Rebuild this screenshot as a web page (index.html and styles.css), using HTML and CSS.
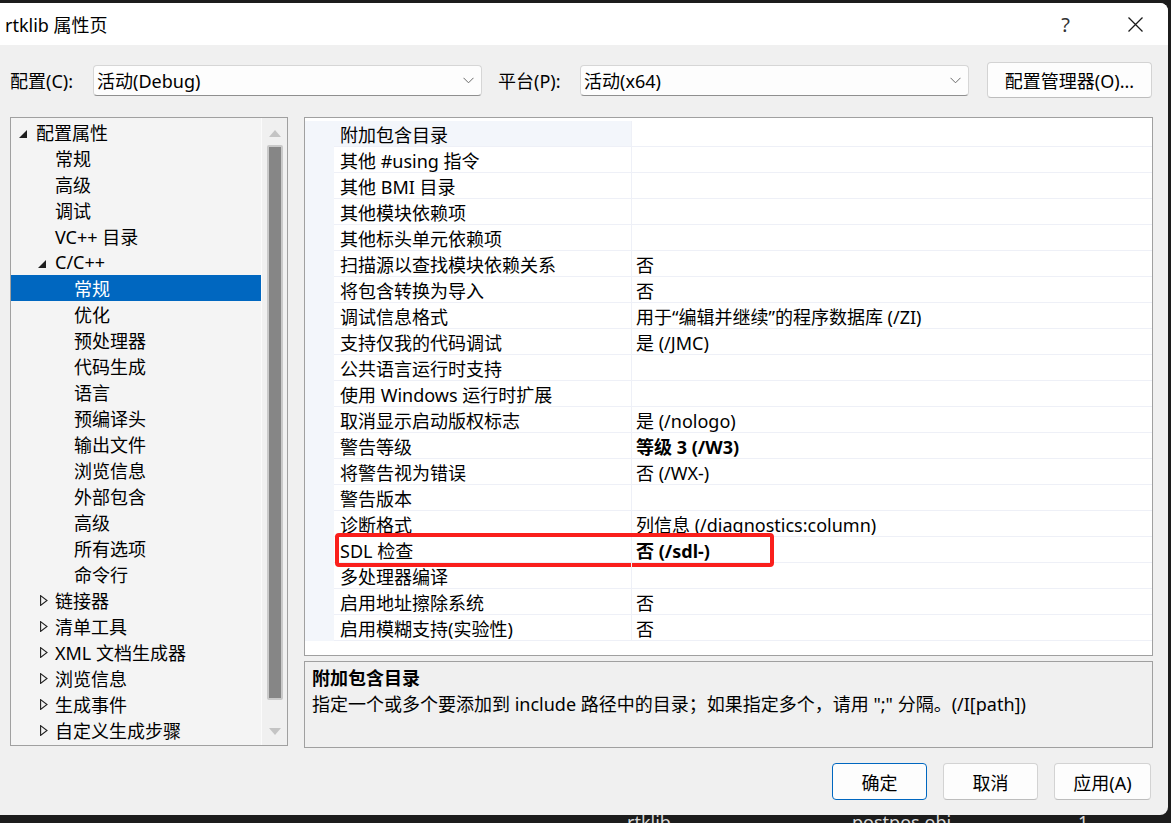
FILE: index.html
```html
<!DOCTYPE html>
<html>
<head>
  <meta charset="UTF-8">
  <link rel="stylesheet" href="styles.css">
</head>
<body>
  <div class="dialog">
    <div class="titlebar">
      <span class="title">rtklib 属性页</span>
      <span class="help">?</span>
      <span class="close">
        <svg width="15" height="15" viewBox="0 0 15 15"><path d="M0.5 0.5 L14.5 14.5 M14.5 0.5 L0.5 14.5" stroke="#1a1a1a" stroke-width="1.3" fill="none"/></svg>
      </span>
    </div>

    <div class="config-row">
      <span class="cfg-label">配置(C):</span>
      <div class="combo">活动(Debug)
        <svg class="chev" width="11" height="7" viewBox="0 0 11 7"><path d="M0.5 0.8 L5.5 5.8 L10.5 0.8" stroke="#6a6a6a" stroke-width="1" fill="none"/></svg>
      </div>
      <span class="cfg-label plat">平台(P):</span>
      <div class="combo">活动(x64)
        <svg class="chev" width="11" height="7" viewBox="0 0 11 7"><path d="M0.5 0.8 L5.5 5.8 L10.5 0.8" stroke="#6a6a6a" stroke-width="1" fill="none"/></svg>
      </div>
      <button class="btn cfg-mgr">配置管理器(O)...</button>
    </div>

    <div class="main">
      <div class="tree">
        <div class="tree-list">
          <div class="tree-item lv0"><span class="twisty"><svg class="tw-open" width="8" height="8" viewBox="0 0 8 8"><polygon points="8,0 8,8 0,8" fill="#1e1e1e"/></svg></span>配置属性</div>
          <div class="tree-item lv1"><span class="twisty"></span>常规</div>
          <div class="tree-item lv1"><span class="twisty"></span>高级</div>
          <div class="tree-item lv1"><span class="twisty"></span>调试</div>
          <div class="tree-item lv1"><span class="twisty"></span>VC++ 目录</div>
          <div class="tree-item lv1"><span class="twisty"><svg class="tw-open" width="8" height="8" viewBox="0 0 8 8"><polygon points="8,0 8,8 0,8" fill="#1e1e1e"/></svg></span>C/C++</div>
          <div class="tree-item lv2 selected"><span class="twisty"></span>常规</div>
          <div class="tree-item lv2"><span class="twisty"></span>优化</div>
          <div class="tree-item lv2"><span class="twisty"></span>预处理器</div>
          <div class="tree-item lv2"><span class="twisty"></span>代码生成</div>
          <div class="tree-item lv2"><span class="twisty"></span>语言</div>
          <div class="tree-item lv2"><span class="twisty"></span>预编译头</div>
          <div class="tree-item lv2"><span class="twisty"></span>输出文件</div>
          <div class="tree-item lv2"><span class="twisty"></span>浏览信息</div>
          <div class="tree-item lv2"><span class="twisty"></span>外部包含</div>
          <div class="tree-item lv2"><span class="twisty"></span>高级</div>
          <div class="tree-item lv2"><span class="twisty"></span>所有选项</div>
          <div class="tree-item lv2"><span class="twisty"></span>命令行</div>
          <div class="tree-item lv1"><span class="twisty"><svg class="tw-closed" width="8" height="11" viewBox="0 0 8 11"><polygon points="0.6,0.6 7,5.5 0.6,10.4" fill="none" stroke="#1e1e1e" stroke-width="1.1"/></svg></span>链接器</div>
          <div class="tree-item lv1"><span class="twisty"><svg class="tw-closed" width="8" height="11" viewBox="0 0 8 11"><polygon points="0.6,0.6 7,5.5 0.6,10.4" fill="none" stroke="#1e1e1e" stroke-width="1.1"/></svg></span>清单工具</div>
          <div class="tree-item lv1"><span class="twisty"><svg class="tw-closed" width="8" height="11" viewBox="0 0 8 11"><polygon points="0.6,0.6 7,5.5 0.6,10.4" fill="none" stroke="#1e1e1e" stroke-width="1.1"/></svg></span>XML 文档生成器</div>
          <div class="tree-item lv1"><span class="twisty"><svg class="tw-closed" width="8" height="11" viewBox="0 0 8 11"><polygon points="0.6,0.6 7,5.5 0.6,10.4" fill="none" stroke="#1e1e1e" stroke-width="1.1"/></svg></span>浏览信息</div>
          <div class="tree-item lv1"><span class="twisty"><svg class="tw-closed" width="8" height="11" viewBox="0 0 8 11"><polygon points="0.6,0.6 7,5.5 0.6,10.4" fill="none" stroke="#1e1e1e" stroke-width="1.1"/></svg></span>生成事件</div>
          <div class="tree-item lv1"><span class="twisty"><svg class="tw-closed" width="8" height="11" viewBox="0 0 8 11"><polygon points="0.6,0.6 7,5.5 0.6,10.4" fill="none" stroke="#1e1e1e" stroke-width="1.1"/></svg></span>自定义生成步骤</div>
        </div>
        <div class="scrollbar">
          <span class="arrow-up"></span>
          <span class="thumb"></span>
          <span class="arrow-down"></span>
        </div>
      </div>

      <div class="right-col">
        <div class="grid">
          <div class="prop-row"><span class="gutter"></span><span class="name current">附加包含目录</span><span class="value"></span></div>
          <div class="prop-row"><span class="gutter"></span><span class="name">其他 #using 指令</span><span class="value"></span></div>
          <div class="prop-row"><span class="gutter"></span><span class="name">其他 BMI 目录</span><span class="value"></span></div>
          <div class="prop-row"><span class="gutter"></span><span class="name">其他模块依赖项</span><span class="value"></span></div>
          <div class="prop-row"><span class="gutter"></span><span class="name">其他标头单元依赖项</span><span class="value"></span></div>
          <div class="prop-row"><span class="gutter"></span><span class="name">扫描源以查找模块依赖关系</span><span class="value">否</span></div>
          <div class="prop-row"><span class="gutter"></span><span class="name">将包含转换为导入</span><span class="value">否</span></div>
          <div class="prop-row"><span class="gutter"></span><span class="name">调试信息格式</span><span class="value">用于“编辑并继续”的程序数据库 (/ZI)</span></div>
          <div class="prop-row"><span class="gutter"></span><span class="name">支持仅我的代码调试</span><span class="value">是 (/JMC)</span></div>
          <div class="prop-row"><span class="gutter"></span><span class="name">公共语言运行时支持</span><span class="value"></span></div>
          <div class="prop-row"><span class="gutter"></span><span class="name">使用 Windows 运行时扩展</span><span class="value"></span></div>
          <div class="prop-row"><span class="gutter"></span><span class="name">取消显示启动版权标志</span><span class="value">是 (/nologo)</span></div>
          <div class="prop-row"><span class="gutter"></span><span class="name">警告等级</span><span class="value bold">等级 3 (/W3)</span></div>
          <div class="prop-row"><span class="gutter"></span><span class="name">将警告视为错误</span><span class="value">否 (/WX-)</span></div>
          <div class="prop-row"><span class="gutter"></span><span class="name">警告版本</span><span class="value"></span></div>
          <div class="prop-row"><span class="gutter"></span><span class="name">诊断格式</span><span class="value">列信息 (/diagnostics:column)</span></div>
          <div class="prop-row"><span class="gutter"></span><span class="name">SDL 检查</span><span class="value bold">否 (/sdl-)</span><span class="mark"></span></div>
          <div class="prop-row"><span class="gutter"></span><span class="name">多处理器编译</span><span class="value"></span></div>
          <div class="prop-row"><span class="gutter"></span><span class="name">启用地址擦除系统</span><span class="value">否</span></div>
          <div class="prop-row"><span class="gutter"></span><span class="name">启用模糊支持(实验性)</span><span class="value">否</span></div>
        </div>
        <div class="desc">
          <div class="desc-title">附加包含目录</div>
          <div>指定一个或多个要添加到 include 路径中的目录；如果指定多个，请用 ";" 分隔。(/I[path])</div>
        </div>
      </div>
    </div>

    <div class="footer-btns">
      <button class="btn primary">确定</button>
      <button class="btn">取消</button>
      <button class="btn apply">应用(A)</button>
    </div>
  </div>
  <div class="taskbar">
    <span class="tb-a">rtklib</span>
    <span class="tb-b">postpos.obj</span>
    <span>1</span>
  </div>
</body>
</html>
```

FILE: styles.css
```css
body { margin: 0; background: #1c1c1c; font-family: "Noto Sans", "Noto Sans CJK SC", sans-serif; font-size: 18px; color: #000; }
.dialog { width: 1168px; height: 812px; margin-top: 3px; background: #f0f0f0; border-radius: 0 8px 8px 0; overflow: hidden; }

/* title bar */
.titlebar { height: 42px; background: #fff; display: flex; align-items: center; padding-left: 5px; }
.title { flex: 1; }
.help { font-size: 20px; color: #333; margin-right: 58px; }
.close { width: 15px; height: 15px; margin-right: 25px; display: flex; }

/* config row */
.config-row { display: flex; align-items: center; height: 36px; margin-top: 17px; padding-left: 10px; }
.cfg-label { width: 83px; white-space: nowrap; }
.cfg-label.plat { width: 82px; margin-left: 16px; }
.combo { width: 389px; height: 31px; box-sizing: border-box; border: 1px solid #d6d6d6; border-bottom-color: #8f8f8f; border-radius: 4px; background: #fdfdfd; display: flex; align-items: center; padding-left: 3px; }
.chev { margin-left: auto; margin-right: 7px; }
.btn { font: inherit; background: #fdfdfd; border: 1px solid #d3d3d3; border-bottom-color: #bdbdbd; border-radius: 4px; padding: 0; color: #000; }
.cfg-mgr { margin-left: 18px; width: 165px; height: 36px; }

/* main */
.main { display: flex; gap: 16px; margin-top: 19px; padding-left: 10px; height: 631px; }
.tree { width: 278px; height: 629px; box-sizing: border-box; border: 1px solid #a0a0a0; background: #f4f4f4; display: flex; }
.tree-list { flex: 1; padding-top: 1px; border-right: 1px solid #fbfbfb; }
.tree-item { height: 26px; display: flex; align-items: center; white-space: nowrap; }
.tree-item.lv0 { padding-left: 8px; }
.tree-item.lv1 { padding-left: 27px; }
.tree-item.lv2 { padding-left: 46px; }
.tree-item.selected { background: #0067c0; color: #fff; }
.twisty { width: 17px; display: flex; align-items: center; }
.tw-open { margin-top: 3px; }
.tw-closed { margin-left: 2px; }
.scrollbar { width: 25px; background: #f0f0f0; display: flex; flex-direction: column; align-items: center; }
.arrow-up { margin-top: 12px; width: 0; height: 0; border-left: 6px solid transparent; border-right: 6px solid transparent; border-bottom: 7px solid #c4c4c4; }
.thumb { margin-top: 8px; width: 12px; height: 551px; background: #868686; border: 2px solid #c9c9c9; border-radius: 2px; box-sizing: content-box; }
.arrow-down { margin-top: auto; margin-bottom: 10px; width: 0; height: 0; border-left: 6px solid transparent; border-right: 6px solid transparent; border-top: 7px solid #c4c4c4; }

/* property grid */
.right-col { width: 849px; display: flex; flex-direction: column; gap: 5px; }
.grid { height: 539px; box-sizing: border-box; border: 1px solid #a0a0a0; background: #fff; padding-top: 3px; }
.prop-row { display: flex; height: 26px; position: relative; }
.gutter { width: 29px; background: #f3f6fb; }
.name { width: 298px; box-sizing: border-box; padding-left: 6px; border-bottom: 1px solid #eef0f7; border-right: 1px solid #eef0f7; display: flex; align-items: center; white-space: nowrap; }
.name.current { background: #f3f6fb; }
.value { flex: 1; padding-left: 4px; border-bottom: 1px solid #eef0f7; display: flex; align-items: center; white-space: nowrap; }
.value.bold { font-weight: bold; }
.mark { position: absolute; left: 30px; top: -4px; width: 439px; height: 34px; box-sizing: border-box; border: 4px solid #fa1f1c; border-radius: 4px; }

/* description */
.desc { height: 87px; box-sizing: border-box; border: 1px solid #a0a0a0; padding: 3px 7px; line-height: 26px; }
.desc-title { font-weight: bold; }

/* buttons */
.footer-btns { display: flex; justify-content: flex-end; gap: 16px; margin-top: 15px; padding-right: 17px; }
.footer-btns .btn { width: 95px; height: 37px; }
.footer-btns .btn.apply { width: 97px; }
.btn.primary { border-color: #0067c0; }

/* taskbar peeking below */
.taskbar { height: 8px; overflow: hidden; color: #d8d8d8; line-height: 14px; padding-left: 627px; display: flex; }
.tb-a { width: 225px; }
.tb-b { width: 226px; }
```
